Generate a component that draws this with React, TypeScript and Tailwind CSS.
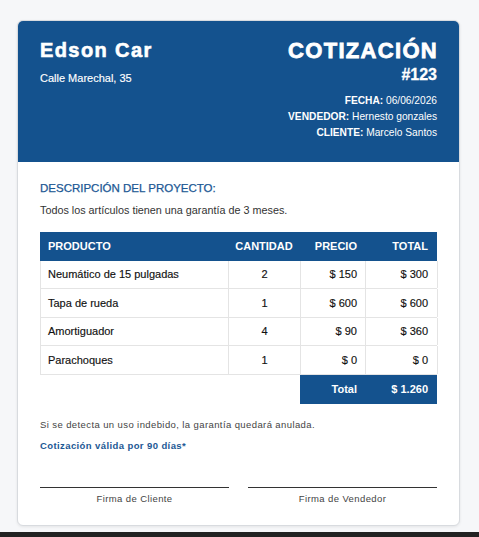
import React from "react";

const rows = [
  { p: "Neumático de 15 pulgadas", c: "2", pr: "$ 150", t: "$ 300" },
  { p: "Tapa de rueda", c: "1", pr: "$ 600", t: "$ 600" },
  { p: "Amortiguador", c: "4", pr: "$ 90", t: "$ 360" },
  { p: "Parachoques", c: "1", pr: "$ 0", t: "$ 0" },
];

export default function App() {
  return (
    <div
      className="w-full h-[537px] overflow-hidden bg-[#f6f7f9] flex flex-col"
      style={{ fontFamily: '"Liberation Sans", Arial, sans-serif' }}
    >
      <div className="pt-[20px] pl-[17px]">
        <div className="w-[443px] bg-white rounded-[6px] border border-[#d8dbdf] overflow-hidden shadow-[0_1px_3px_rgba(0,0,0,0.08)]">
          {/* Header */}
          <div className="bg-[#14528e] px-[22px] pt-[19px] pb-[21px] flex justify-between text-white">
            <div>
              <div className="text-[20px] leading-[20px] font-bold tracking-[1.4px] [-webkit-text-stroke:0.6px_white]">Edson Car</div>
              <div className="mt-[12.5px] text-[11px] leading-[11px] [-webkit-text-stroke:0.15px_white]">Calle Marechal, 35</div>
            </div>
            <div className="text-right">
              <div className="text-[22px] leading-[22px] font-black tracking-[1.3px] mr-[-1px] [-webkit-text-stroke:0.8px_white]">COTIZACIÓN</div>
              <div className="mt-[5px] text-[16px] leading-[16px] font-bold [-webkit-text-stroke:0.3px_white]">#123</div>
              <div className="mt-[10px] text-[10.2px] leading-[16px]">
                <div>
                  <span className="font-bold">FECHA:</span> 06/06/2026
                </div>
                <div>
                  <span className="font-bold">VENDEDOR:</span> Hernesto gonzales
                </div>
                <div>
                  <span className="font-bold">CLIENTE:</span> Marcelo Santos
                </div>
              </div>
            </div>
          </div>

          {/* Body */}
          <div className="px-[22px] pt-[20.5px] pb-[21px]">
            <div className="text-[11.5px] leading-[11.5px] text-[#1c5894] [-webkit-text-stroke:0.25px_#1c5894]">DESCRIPCIÓN DEL PROYECTO:</div>
            <div className="mt-[10.5px] text-[10.8px] leading-[10.8px] text-[#333]">
              Todos los artículos tienen una garantía de 3 meses.
            </div>

            <div className="mt-[16.5px] text-[11px]">
              <div className="grid grid-cols-[188px_72px_65px_72px] h-[29px] bg-[#14528e] text-white font-bold items-center">
                <div className="pl-[8px]">PRODUCTO</div>
                <div className="text-center">CANTIDAD</div>
                <div className="text-right pr-[8px]">PRECIO</div>
                <div className="text-right pr-[9px]">TOTAL</div>
              </div>
              {rows.map((r) => (
                <div
                  key={r.p}
                  className="grid grid-cols-[188px_72px_65px_72px] h-[28.5px] text-[#111] border-b border-l border-[#e4e4e4] [-webkit-text-stroke:0.15px_#111]"
                >
                  <div className="pl-[7px] flex items-center border-r border-[#e4e4e4]">{r.p}</div>
                  <div className="flex items-center justify-center border-r border-[#e4e4e4]">{r.c}</div>
                  <div className="flex items-center justify-end pr-[8px] border-r border-[#e4e4e4]">{r.pr}</div>
                  <div className="flex items-center justify-end pr-[9px] border-r border-[#e4e4e4]">{r.t}</div>
                </div>
              ))}
              <div className="grid grid-cols-[188px_72px_65px_72px] h-[29px]">
                <div className="col-start-3 col-span-2 grid grid-cols-[65px_72px] bg-[#14528e] text-white font-bold items-center">
                  <div className="text-right pr-[8px]">Total</div>
                  <div className="text-right pr-[9px]">$ 1.260</div>
                </div>
              </div>
            </div>

            <div className="mt-[15.8px] text-[9.5px] leading-[9.5px] tracking-[0.4px] text-[#444]">
              Si se detecta un uso indebido, la garantía quedará anulada.
            </div>
            <div className="mt-[12.2px] text-[9.5px] leading-[9.5px] tracking-[0.4px] font-bold text-[#1c5894]">
              Cotización válida por 90 días*
            </div>

            <div className="mt-[36px] flex gap-[19px]">
              <div className="flex-1">
                <div className="h-px bg-[#333]"></div>
                <div className="mt-[6.5px] text-center text-[9.5px] leading-[9.5px] tracking-[0.4px] text-[#444]">
                  Firma de Cliente
                </div>
              </div>
              <div className="flex-1">
                <div className="h-px bg-[#333]"></div>
                <div className="mt-[6.5px] text-center text-[9.5px] leading-[9.5px] tracking-[0.4px] text-[#444]">
                  Firma de Vendedor
                </div>
              </div>
            </div>
          </div>
        </div>
      </div>
      <div className="mt-[6px] h-[20px] bg-[#222] shrink-0"></div>
    </div>
  );
}
